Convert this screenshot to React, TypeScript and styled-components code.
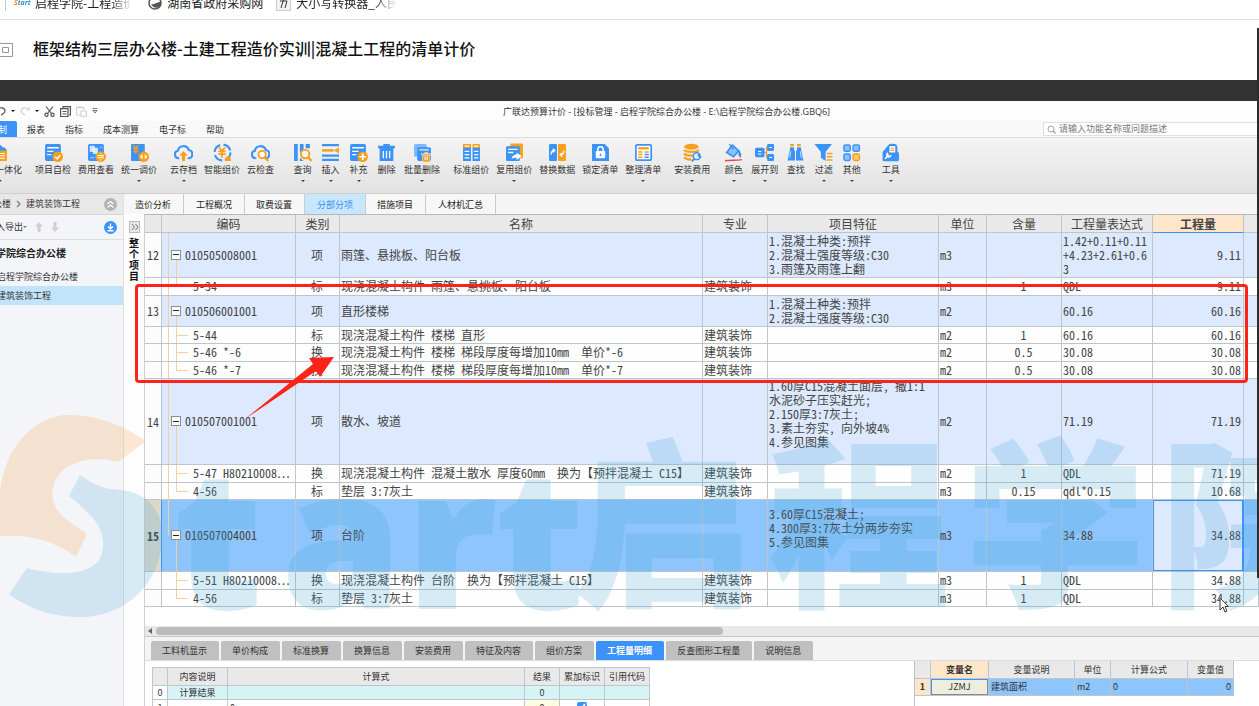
import React from "react";
import styled, { createGlobalStyle, css } from "styled-components";

const BLUE = "#3b92f8";
const ORANGE = "#f9a01b";
const LINE = "#bdc6cc";

const Global = createGlobalStyle`
  *, *::before, *::after { box-sizing: border-box; }
  body {
    margin: 0;
    background: #fff;
    color: #333;
    font-family: "Noto Sans CJK SC", "Open Sans", sans-serif;
  }
  button, input { font: inherit; color: inherit; }
  button { border: 0; padding: 0; background: none; }
`;

const Page = styled.div`
  position: relative;
  height: 100vh;
  display: flex;
  flex-direction: column;
  overflow: hidden;
`;

/* ---------- browser bookmarks and lesson title ---------- */

const BookmarkBar = styled.nav`
  flex: none;
  height: 20px;
  padding: 0 0 8px 5px;
  display: flex;
  align-items: flex-end;
  overflow: hidden;
  border-bottom: 1px solid #e2e2e2;
`;

const Divider = styled.span`
  width: 1px;
  height: 16px;
  margin-right: 8px;
  background: #c8c8c8;
`;

const Bookmark = styled.a<{ $fade?: boolean }>`
  display: flex;
  align-items: center;
  gap: 5px;
  height: 16px;
  margin-right: 13px;
  font-size: 12px;
  line-height: 16px;
  color: #222;
  text-decoration: none;
  white-space: nowrap;
  ${(p) => p.$fade && css`
    -webkit-mask-image: linear-gradient(90deg, #000 80%, transparent 98%);
    mask-image: linear-gradient(90deg, #000 80%, transparent 98%);
  `}
`;

const StartMark = styled.span`
  width: 16px;
  font: italic bold 7px/16px "Open Sans", sans-serif;
  color: #2b8fd0;
  &::first-letter { color: #f08a24; }
`;

const LessonHeader = styled.header`
  flex: none;
  height: 60px;
  padding-bottom: 4px;
  display: flex;
  align-items: center;
  gap: 20px;
  svg { margin-top: 4px; }
`;

const LessonTitle = styled.h1`
  margin: 0;
  font-size: 16px;
  line-height: 24px;
  font-weight: 500;
  color: #111;
`;

const PlayerBand = styled.div`
  flex: none;
  height: 21px;
  background: #333;
`;

/* ---------- application window ---------- */

const AppWindow = styled.main`
  position: relative;
  flex: 1;
  min-height: 0;
  margin-left: -24px;
  display: flex;
  flex-direction: column;
  font-size: 9px;
  line-height: 12px;
  background: #fff;
`;

const TitleRow = styled.div`
  flex: none;
  height: 20px;
  padding: 0 24px 0 20px;
  display: flex;
  align-items: center;
  background: #fdfdfd;
`;

const QuickAccess = styled.div`
  display: flex;
  align-items: center;
  gap: 5px;
`;

const IconButton = styled.button<{ $dim?: boolean }>`
  display: flex;
  color: ${(p) => (p.$dim ? "#d4d4d4" : "#555")};
`;

const WindowTitle = styled.div`
  flex: 1;
  padding-top: 1px;
  text-align: center;
  white-space: nowrap;
  font-family: "Open Sans", "Noto Sans CJK SC", sans-serif;
`;

const MenuRow = styled.nav`
  flex: none;
  height: 17px;
  padding-left: 3px;
  display: flex;
  background: #f9f9f9;
  border-bottom: 1px solid #dcdcdc;
`;

const MenuItem = styled.button<{ $active?: boolean }>`
  padding: 2px 10px 0;
  border-radius: 2px 2px 0 0;
  color: ${(p) => (p.$active ? "#fff" : "#333")};
  background: ${(p) => (p.$active ? BLUE : "none")};
`;

const SearchBox = styled.label`
  width: 216px;
  height: 14px;
  margin: 1px 0 0 auto;
  padding-left: 3px;
  display: flex;
  align-items: center;
  gap: 3px;
  color: #999;
  background: #fff;
  border: 1px solid #e0e0e0;
  border-right: 0;
  input {
    flex: 1;
    min-width: 0;
    height: 12px;
    padding: 0;
    border: 0;
    outline: 0;
    background: none;
  }
  input::placeholder { color: #777; opacity: 1; }
`;

const Ribbon = styled.div`
  flex: none;
  height: 56px;
  padding-top: 5px;
  padding-left: 1px;
  display: flex;
  background: linear-gradient(#f4f4f4, #e2e2e2);
  border-bottom: 1px solid #cfcfcf;
`;

const RibbonGroup = styled.div<{ $wide?: boolean }>`
  display: flex;
  align-items: flex-start;
  gap: 7px;
  margin-right: ${(p) => (p.$wide ? 18 : 13)}px;
`;

const RibbonButton = styled.button`
  min-width: 21px;
  display: flex;
  flex-direction: column;
  align-items: center;
  white-space: nowrap;
  line-height: 12px;
  svg { display: block; }
  span { margin: 2px 0 4px; }
`;

const Caret = styled.i<{ $color?: string }>`
  width: 0;
  height: 0;
  border: 2px solid transparent;
  border-top-color: ${(p) => p.$color || "#444"};
  border-bottom: 0;
`;

const Body = styled.div`
  flex: 1;
  min-height: 0;
  display: flex;
`;

const ProjectPanel = styled.aside`
  flex: none;
  width: 148px;
  background: #f4f5f8;
  border-right: 1px solid #e0e0e0;
`;

const Crumbs = styled.div`
  height: 21px;
  padding: 0 6px 0 17px;
  display: flex;
  align-items: center;
  gap: 5px;
  background: #e8e8e8;
  border-bottom: 1px solid #d6d6d6;
`;

const PanelTools = styled.div`
  height: 25px;
  padding: 0 6px 0 11px;
  display: flex;
  align-items: center;
  border-bottom: 1px solid #dedede;
`;

const Push = styled.span`
  margin-left: auto;
  display: flex;
`;

const Arrows = styled.span`
  display: flex;
  gap: 6px;
  margin-left: 7px;
`;

const TreeRoot = styled.div`
  padding: 5px 0 6px 20px;
  font-size: 10px;
  line-height: 16px;
  font-weight: bold;
  color: #222;
`;

const TreeItem = styled.div<{ $selected?: boolean }>`
  padding: 0 0 0 21px;
  line-height: 19px;
  background: ${(p) => (p.$selected ? "#c3e3fb" : "none")};
`;

const Workspace = styled.div`
  flex: 1;
  min-width: 0;
  display: flex;
  flex-direction: column;
`;

const ViewTabs = styled.div`
  flex: none;
  height: 20px;
  display: flex;
  background: #f5f5f5;
`;

const ViewTab = styled.button<{ $active?: boolean }>`
  padding: 1px 12px 0 11px;
  color: ${(p) => (p.$active ? BLUE : "#222")};
  background: ${(p) => (p.$active ? "#c8e6fd" : "#f7f7f7")};
  border-right: 1px solid #ccc;
  &:nth-child(even) { padding-left: 12px; }
`;

const WorkArea = styled.div`
  flex: 1;
  min-height: 0;
  display: flex;
`;

const Strip = styled.div`
  flex: none;
  width: 21px;
  padding: 7px 0 0 5px;
  border-right: 1px solid #d0d0d0;
  background: #fdfdfd;
`;

const StripToggle = styled.button`
  width: 11px;
  height: 12px;
  display: flex;
  align-items: center;
  justify-content: center;
  color: #777;
  background: #e6e6e6;
  border: 1px solid #bbb;
`;

const StripLabel = styled.div`
  width: 10px;
  margin-top: 4px;
  font-size: 10px;
  line-height: 11px;
  font-weight: bold;
  color: #111;
`;

const Content = styled.div`
  flex: 1;
  min-width: 0;
  display: flex;
  flex-direction: column;
`;

const GridArea = styled.div`
  position: relative;
  flex: none;
  height: 412px;
  border-top: 1px solid #b8b8b8;
`;

const Table = styled.table`
  width: 100%;
  table-layout: fixed;
  border-spacing: 0;
  font: 12px/14px "Noto Sans Mono CJK SC", "Liberation Serif", "Noto Sans CJK SC", monospace;
  color: #444;
`;

const HeadCell = styled.th<{ $active?: boolean }>`
  height: 18px;
  padding: 0;
  font-weight: ${(p) => (p.$active ? "bold" : "normal")};
  white-space: nowrap;
  background: ${(p) => (p.$active ? "#ffe5ca" : "#e9e9e9")};
  border-right: 1px solid ${LINE};
  border-bottom: 1px solid ${(p) => (p.$active ? BLUE : LINE)};
`;

type Tone = "item" | "child" | "selected";
const toneColor: Record<Tone, string> = {
  item: "#dce9fe",
  child: "#fefefe",
  selected: "#8ec5fc",
};

const Row = styled.tr<{ $tone: Tone; $h: number }>`
  height: ${(p) => p.$h}px;
  background: ${(p) => toneColor[p.$tone]};
`;

const Cell = styled.td<{ $align?: string; $focus?: boolean }>`
  padding: 0 2px 1px 1px;
  overflow: hidden;
  white-space: pre;
  text-align: ${(p) => p.$align || "left"};
  border-right: 1px solid ${LINE};
  border-bottom: 1px solid ${LINE};
  ${(p) => p.$focus && css`
    background: #dce9fe;
    box-shadow: inset 0 0 0 1px ${BLUE};
    border-right-color: ${BLUE};
  `}
`;

const NumberCell = styled(Cell)<{ $current?: boolean }>`
  padding: 0;
  text-align: center;
  background: ${(p) => (p.$current ? "#dcd9cb" : "#fcfcfc")};
  font-weight: ${(p) => (p.$current ? "bold" : "normal")};
  border-right-color: ${(p) => (p.$current ? BLUE : LINE)};
`;

const stem = "linear-gradient(#f3cf9f, #f3cf9f)";
const trunkSize = { full: "1px 100%", half: "1px 50%", none: "0 0" };
const branch = { start: ["14px 100%", "1px 50%"], mid: ["14px 0", "1px 100%"], end: ["14px 0", "1px 50%"] };

const CodeCell = styled(Cell)<{
  $trunk: "full" | "half" | "none";
  $branch: "start" | "mid" | "end";
}>`
  padding-left: ${(p) => (p.$branch === "start" ? 9 : 31)}px;
  background-image: ${stem}, ${stem}, ${stem};
  background-repeat: no-repeat;
  background-position: 6px 0, ${(p) => branch[p.$branch][0]}, 14px 50%;
  background-size: ${(p) => trunkSize[p.$trunk]}, ${(p) => branch[p.$branch][1]},
    ${(p) => (p.$branch === "start" ? "0 0" : "12px 1px")};
`;

const CodeLabel = styled.span`
  display: flex;
  align-items: center;
  gap: 4px;
`;

const Collapse = styled.button`
  flex: none;
  width: 10px;
  height: 10px;
  display: flex;
  align-items: center;
  justify-content: center;
  background: #fff;
  border: 1px solid #8a9099;
  &::before {
    content: "";
    width: 6px;
    height: 1px;
    background: #222;
  }
`;

const RedFrame = styled.div`
  position: absolute;
  top: 69px;
  left: -10px;
  right: 11px;
  height: 99px;
  border: 3px solid #fb2416;
  border-radius: 4px;
`;

const RedArrow = styled.svg`
  position: absolute;
  top: 140px;
  left: 98px;
`;

const Pointer = styled.svg`
  position: absolute;
  top: 382px;
  right: 30px;
`;

const Scroll = styled.div`
  flex: none;
  height: 11px;
  padding: 0 0 0 3px;
  display: flex;
  align-items: center;
  gap: 4px;
  background: #e8e8e8;
  border-bottom: 1px solid #c4c8cb;
`;

const ScrollThumb = styled.div`
  width: 51%;
  height: 8px;
  border-radius: 4px;
  background: #bcbcbc;
`;

const DetailTabs = styled.div`
  flex: none;
  height: 24px;
  padding-left: 6px;
  display: flex;
  align-items: flex-end;
  gap: 2px;
  background: #f4f4f5;
  border-bottom: 1px solid #dcdcdc;
`;

const DetailTab = styled.button<{ $active?: boolean }>`
  height: 19px;
  padding: 1px 12px 0 11px;
  white-space: nowrap;
  border-radius: 2px 2px 0 0;
  font-weight: ${(p) => (p.$active ? "bold" : "normal")};
  color: ${(p) => (p.$active ? "#fff" : "#333")};
  background: ${(p) => (p.$active ? BLUE : "#c0c0c0")};
`;

const Detail = styled.div`
  flex: 1;
  min-height: 0;
  display: flex;
  overflow: hidden;
`;

const CalcPane = styled.section`
  flex: 1;
  padding: 6px 7px;
`;

const VarPane = styled.section`
  flex: 0 0 345px;
  border-left: 1px solid #c0c0c0;
`;

const SmallTable = styled.table<{ $w: number }>`
  width: ${(p) => p.$w}px;
  table-layout: fixed;
  border-spacing: 0;
  border-left: 1px solid ${LINE};
  border-top: 1px solid ${LINE};
  white-space: nowrap;
`;

const SmallHead = styled.th<{ $active?: boolean }>`
  height: 18px;
  padding: 0;
  font-weight: ${(p) => (p.$active ? "bold" : "normal")};
  background: ${(p) => (p.$active ? "#ffe5ca" : "#e9e9e9")};
  border-right: 1px solid ${LINE};
  border-bottom: 1px solid ${LINE};
`;

const SmallCell = styled.td<{ $bg?: string; $align?: string; $bold?: boolean; $focus?: boolean }>`
  height: 14px;
  padding: 0 2px;
  text-align: ${(p) => p.$align || "center"};
  background: ${(p) => p.$bg || "#fff"};
  font-weight: ${(p) => (p.$bold ? "bold" : "normal")};
  border-right: 1px solid ${LINE};
  border-bottom: 1px solid ${LINE};
  ${(p) => p.$focus && css`box-shadow: inset 1px 1px 0 ${BLUE}, inset -1px -1px 0 #888;`}
`;

const VarTable = styled(SmallTable)`
  border-left: 0;
  border-top: 0;
  td { height: 17px; }
`;

const Tick = styled.input`
  width: 10px;
  height: 10px;
  margin: 2px 0 0;
  accent-color: ${BLUE};
`;

const Watermark = styled.svg`
  position: absolute;
  top: 300px;
  left: 24px;
  width: calc(100% - 24px);
  height: 230px;
  pointer-events: none;
`;

const PageScrollThumb = styled.div`
  position: absolute;
  top: 28px;
  right: 0;
  width: 2px;
  height: 550px;
  background: #2c2c2c;
`;

/* ---------- ribbon drawings, all on an 18-unit board ---------- */

const doc = <rect x="1" y="1" width="15" height="16" rx="1.5" fill={BLUE} />;
const cloud = (
  <path d="M5 14.5H4.5A3.6 3.6 0 0 1 3.6 7.4 5.4 5.4 0 0 1 14 6.6a4 4 0 0 1 0 7.9H13" fill="none" stroke={BLUE} strokeWidth="2" />
);

const art: Record<string, React.ReactNode> = {
  integrate: (
    <>
      <path d="M3 12a4 4 0 0 1 0-7 5 5 0 0 1 9-1 4 4 0 0 1 4 4v3z" fill={BLUE} />
      <rect x="7" y="7" width="9" height="10" rx="1" fill={ORANGE} />
      <path d="M9 10h5M9 12h5M9 14.500h5" stroke="#fff" />
    </>
  ),
  check: (
    <>
      {doc}
      <path d="M3 4.500h11M3 8h6M3 11h4" stroke="#fff" strokeWidth="1.200" />
      <circle cx="13" cy="13" r="5" fill={ORANGE} />
      <path d="M10.500 13l2 2 3-3.500" fill="none" stroke="#fff" strokeWidth="1.400" />
    </>
  ),
  fee: (
    <>
      {doc}
      <path d="M3 3h4v5H3zM6 5h4v5H6z" fill="#cfe4fd" stroke="#fff" strokeWidth=".6" />
      <path d="M12 4h3M3 14h4" stroke="#9fcbfb" />
      <circle cx="13" cy="13" r="5" fill={ORANGE} />
      <path d="M10 12h6M16 14h-6M13 9.500v1M13 15.500v1" stroke="#fff" strokeWidth="1.100" />
    </>
  ),
  adjust: (
    <>
      <rect x="1" y="1" width="13" height="16" rx="1" fill={BLUE} />
      <path d="M3 2l2.500 3L8 2M3 5.500h5M3 8h5M5.500 5v5" fill="none" stroke={ORANGE} strokeWidth="1.400" />
      <circle cx="13" cy="13" r="5" fill={ORANGE} />
      <path d="M12 10.500v5L9.500 13zM14 10.500v5l2.500-2.500z" fill="#fff" />
    </>
  ),
  upload: (
    <>
      {cloud}
      <path d="M9 7.500l4 4.500h-2.500v5h-3v-5H5z" fill={ORANGE} />
    </>
  ),
  smart: (
    <>
      <circle cx="9" cy="9" r="7.500" fill="none" stroke={BLUE} strokeWidth="2" strokeDasharray="9 3" />
      <path d="M5.500 4l3 3.500 3-3.500M5 8h7M5 10.500h7M8.500 7.500V14" fill="none" stroke={ORANGE} strokeWidth="1.600" />
      <path d="M11 17v-2l3-3 3 3v2z" fill={ORANGE} />
    </>
  ),
  cloudCheck: (
    <>
      {cloud}
      <circle cx="10.500" cy="11" r="3.500" fill="#fff" stroke={ORANGE} strokeWidth="1.700" />
      <path d="M13 13.500l3.500 3.500" stroke={ORANGE} strokeWidth="2" />
    </>
  ),
  query: (
    <>
      <path d="M1 1h3.500v16H1zM6.500 1H10v5l-3.500 3zM12 1h4v4h-4zM6.500 14L10 17H6.500z" fill={BLUE} />
      <circle cx="11.500" cy="10.500" r="4" fill="#f4f4f4" stroke={ORANGE} strokeWidth="1.800" />
      <path d="M14.500 13.500l3 3.500" stroke={ORANGE} strokeWidth="2.200" />
    </>
  ),
  insert: (
    <>
      <path d="M1 2h16M1 12h16M1 16h16" stroke={BLUE} strokeWidth="2.200" />
      <path d="M1 7h11" stroke={ORANGE} strokeWidth="2.400" />
      <path d="M17 4v6l-5-3z" fill={ORANGE} />
    </>
  ),
  supply: (
    <>
      {doc}
      <path d="M3 4.500h11M3 8h6M3 11h4" stroke="#fff" strokeWidth="1.200" />
      <circle cx="13" cy="13" r="5" fill={ORANGE} />
      <path d="M10 13h6M13 10v6" stroke="#fff" strokeWidth="1.500" />
    </>
  ),
  remove: (
    <>
      <path d="M1 2.500h16V5H1zM6 1h6v2H6zM2.500 5h13v12h-13z" fill={BLUE} />
      <path d="M6 7.500v7M9 7.500v7M12 7.500v7" stroke="#fff" strokeWidth="1.200" />
    </>
  ),
  batch: (
    <>
      <rect x="1" y="1" width="12" height="12" rx="1.500" fill="#7db8fa" />
      <rect x="4" y="4" width="13" height="13" rx="1.500" fill={BLUE} />
      <path d="M6 6.500h9" stroke="#fff" />
      <path d="M8 10h9v1.500H8zM9 12h7v6H9zM11 9h3v1h-3z" fill={ORANGE} stroke="#fff" strokeWidth=".4" />
      <path d="M11.500 13v3M13.500 13v3" stroke="#fff" />
    </>
  ),
  standard: (
    <>
      <path d="M1 1h7.500v4H1zM1 4h7.500v13H1zM10 4h7v13h-7z" fill={BLUE} />
      <path d="M1 1h7.500v3.500H1zM10 1h7v3.500h-7z" fill={ORANGE} />
      <path d="M2.500 3h4.500M2.500 8h4.500M2.500 11h4.500M2.500 14h4.500M11.500 3h4M11.500 8h4M11.500 11h4M11.500 14h4" stroke="#fff" strokeWidth="1.200" />
    </>
  ),
  reuse: (
    <>
      <rect x="5" y="0.500" width="12" height="14" rx="1" fill={ORANGE} />
      <rect x="1" y="3" width="13" height="14" rx="1" fill={BLUE} />
      <path d="M3 6h9M3 9h5" stroke="#fff" strokeWidth="1.200" />
      <path d="M6 15c1-3 3-4 5-4V9l5 3.500-5 3.500v-2c-2 0-3 0-5 1z" fill="#fff" />
    </>
  ),
  replace: (
    <>
      <rect x="1" y="1" width="7.500" height="16" rx="1" fill={BLUE} />
      <rect x="9.500" y="1" width="7.500" height="16" rx="1" fill={ORANGE} />
      <path d="M3 11c0-3 1-4 3-4M4.500 5.500L6.500 7l-2 2M15 7c0 3-1 4-3 4M13.500 9.500l-2 1.500 2 2" fill="none" stroke="#fff" strokeWidth="1.200" />
    </>
  ),
  lock: (
    <>
      <path d="M1 1h12l4 4v12H1z" fill={BLUE} />
      <rect x="4.500" y="7.500" width="9" height="7" rx="1" fill="#fff" />
      <path d="M6.500 8V6a2.500 2.500 0 0 1 5 0v2" fill="none" stroke="#fff" strokeWidth="1.500" />
      <path d="M9 10v2.500" stroke={BLUE} strokeWidth="1.400" />
    </>
  ),
  arrange: (
    <>
      <rect x="1.800" y="1.800" width="14.500" height="14.500" rx="1" fill="#fff" stroke={BLUE} strokeWidth="1.600" />
      <path d="M4 5h10" stroke={ORANGE} strokeWidth="2.200" />
      <path d="M4 8.500h4M4 11h4M4 13.500h4M10 8.500h4" stroke={ORANGE} strokeWidth="1.400" />
      <path d="M10 11h4M10 13.500h4" stroke={BLUE} strokeWidth="1.400" />
    </>
  ),
  install: (
    <>
      <ellipse cx="8" cy="3.500" rx="7" ry="2.700" fill={ORANGE} />
      <path d="M1 6.500c2 2.500 12 2.500 14 0M1 10c2 2.500 9 2.500 12 1M1 13.500c2 2 5 2.300 7 2" fill="none" stroke={ORANGE} strokeWidth="2.200" />
      <circle cx="13" cy="12.500" r="3.200" fill="#f4f4f4" stroke={BLUE} strokeWidth="1.500" />
      <path d="M11 14.500L8.500 17.500M14 11l3 3" stroke={BLUE} strokeWidth="1.800" />
    </>
  ),
  color: (
    <>
      <path d="M8 2l6 5.500-5 5.500-6.500-4z" fill="#8bc2fb" stroke={BLUE} strokeWidth="1.600" />
      <path d="M5 1l4 5M14.500 8c1.500 2 1.500 3 1 5-1.500-1-1.500-3-1-5z" stroke={BLUE} fill={BLUE} strokeWidth="1.200" />
      <path d="M1 16.800c5-1 10 0 16-1" fill="none" stroke="#e8474c" strokeWidth="1.300" />
    </>
  ),
  expand: (
    <>
      <path d="M8 9h3M11 9V4h1M11 9v5h1" fill="none" stroke={ORANGE} strokeWidth="1.200" />
      <rect x="0" y="4.500" width="9" height="9" rx="1.500" fill={BLUE} />
      <rect x="11.500" y="1" width="6.500" height="6.500" rx="1" fill={BLUE} />
      <rect x="11.500" y="10.500" width="6.500" height="6.500" rx="1" fill={BLUE} />
      <path d="M3 8h3M3 10.500h3M13.500 4.300h2.500M13.500 13.800h2.500" stroke="#fff" />
    </>
  ),
  find: (
    <>
      <path d="M4 4h3.500v2l1 2v8.500H1.500L3.500 7zM10.500 4H14l.5 3 2 9.500H9.500V8l1-2z" fill={BLUE} />
      <path d="M4 1h3.500v2H4zM10.500 1H14v2h-3.500z" fill={ORANGE} />
      <path d="M4.500 8l-1 6M13.500 8l1 6" stroke="#bfdcfd" />
    </>
  ),
  filter: (
    <>
      <path d="M0.500 1h16.500L11 8.500v8.500l-4.500-3V8.500z" fill={BLUE} />
      <path d="M12 10h5.500M12 13h5.500M12 16h5.500" stroke={ORANGE} strokeWidth="1.400" />
    </>
  ),
  other: (
    <>
      {[[1.8, 1.8], [10.5, 1.8], [1.8, 10.5]].map(([x, y]) => (
        <rect key={`${x}-${y}`} x={x} y={y} width="6" height="6" rx="1.500" fill="#8bc2fb" stroke={BLUE} strokeWidth="1.400" />
      ))}
      <rect x="10.500" y="10.500" width="6" height="6" rx="1.500" fill="#ffc870" stroke={ORANGE} strokeWidth="1.400" />
    </>
  ),
  tools: (
    <>
      <path d="M1.500 16V8.500L7 2q1-1.300 3-1.300h2q3.500 0 3.500 3.500V8l1.500 1.500V16q0 1.300-1.500 1.300H3Q1.500 17.300 1.500 16z" fill={BLUE} />
      <path d="M8 3h5.500v6H8z" fill="#fff" />
      <path d="M9 5h3.500M9 7h3.500" stroke={ORANGE} />
      <path d="M4 15l3.500-4M6.500 9.500a2 2 0 1 0 3 2" fill="none" stroke="#fff" strokeWidth="1.500" />
    </>
  ),
};

const RibbonIcon = ({ name }: { name: string }) => (
  <svg width="19" height="19" viewBox="0 0 18 18" aria-hidden="true">{art[name]}</svg>
);

type Tool = [icon: string, label: string, menu?: boolean];
const ribbon: { wide?: boolean; tools: Tool[] }[] = [
  { tools: [["integrate", "量价一体化", true]] },
  { tools: [["check", "项目自检"], ["fee", "费用查看"], ["adjust", "统一调价", true]] },
  { wide: true, tools: [["upload", "云存档", true], ["smart", "智能组价"], ["cloudCheck", "云检查"]] },
  { tools: [["query", "查询", true], ["insert", "插入", true], ["supply", "补充", true], ["remove", "删除"], ["batch", "批量删除", true]] },
  { tools: [["standard", "标准组价"], ["reuse", "复用组价", true], ["replace", "替换数据"], ["lock", "锁定清单"], ["arrange", "整理清单", true]] },
  { tools: [["install", "安装费用", true]] },
  { wide: true, tools: [["color", "颜色", true], ["expand", "展开到", true], ["find", "查找"], ["filter", "过滤", true], ["other", "其他", true]] },
  { tools: [["tools", "工具", true]] },
];

/* ---------- bill of quantities ---------- */

interface Entry {
  h: number;
  no?: string;
  code: string;
  kind: string;
  name: string;
  trade?: string;
  feature?: string;
  unit: string;
  ratio?: string;
  expr: string;
  qty: string;
  tone: Tone;
  trunk: "full" | "half" | "none";
  branch: "start" | "mid" | "end";
}

const entries: Entry[] = [
  { h: 45, no: "12", code: "010505008001", kind: "项", name: "雨篷、悬挑板、阳台板", feature: "1.混凝土种类:预拌\n2.混凝土强度等级:C30\n3.雨篷及雨篷上翻", unit: "m3", expr: "1.42+0.11+0.11\n+4.23+2.61+0.6\n3", qty: "9.11", tone: "item", trunk: "full", branch: "start" },
  { h: 18, code: "5-34", kind: "标", name: "现浇混凝土构件 雨篷、悬挑板、阳台板", trade: "建筑装饰", unit: "m3", ratio: "1", expr: "QDL", qty: "9.11", tone: "child", trunk: "full", branch: "end" },
  { h: 31, no: "13", code: "010506001001", kind: "项", name: "直形楼梯", feature: "1.混凝土种类:预拌\n2.混凝土强度等级:C30", unit: "m2", expr: "60.16", qty: "60.16", tone: "item", trunk: "full", branch: "start" },
  { h: 17, code: "5-44", kind: "标", name: "现浇混凝土构件 楼梯 直形", trade: "建筑装饰", unit: "m2", ratio: "1", expr: "60.16", qty: "60.16", tone: "child", trunk: "full", branch: "mid" },
  { h: 18, code: "5-46 *-6", kind: "换", name: "现浇混凝土构件 楼梯 梯段厚度每增加10mm  单价*-6", trade: "建筑装饰", unit: "m2", ratio: "0.5", expr: "30.08", qty: "30.08", tone: "child", trunk: "full", branch: "mid" },
  { h: 17, code: "5-46 *-7", kind: "换", name: "现浇混凝土构件 楼梯 梯段厚度每增加10mm  单价*-7", trade: "建筑装饰", unit: "m2", ratio: "0.5", expr: "30.08", qty: "30.08", tone: "child", trunk: "full", branch: "end" },
  { h: 86, no: "14", code: "010507001001", kind: "项", name: "散水、坡道", feature: "1.60厚C15混凝土面层, 撒1:1\n水泥砂子压实赶光;\n2.150厚3:7灰土;\n3.素土夯实, 向外坡4%\n4.参见图集\n ", unit: "m2", expr: "71.19", qty: "71.19", tone: "item", trunk: "full", branch: "start" },
  { h: 18, code: "5-47 H80210008⋯", kind: "换", name: "现浇混凝土构件 混凝土散水 厚度60mm  换为【预拌混凝土 C15】", trade: "建筑装饰", unit: "m2", ratio: "1", expr: "QDL", qty: "71.19", tone: "child", trunk: "full", branch: "mid" },
  { h: 17, code: "4-56", kind: "标", name: "垫层 3:7灰土", trade: "建筑装饰", unit: "m3", ratio: "0.15", expr: "qdl*0.15", qty: "10.68", tone: "child", trunk: "full", branch: "end" },
  { h: 72, no: "15", code: "010507004001", kind: "项", name: "台阶", feature: "3.60厚C15混凝土;\n4.300厚3:7灰土分两步夯实\n5.参见图集\n ", unit: "m3", expr: "34.88", qty: "34.88", tone: "selected", trunk: "half", branch: "start" },
  { h: 18, code: "5-51 H80210008⋯", kind: "换", name: "现浇混凝土构件 台阶  换为【预拌混凝土 C15】", trade: "建筑装饰", unit: "m3", ratio: "1", expr: "QDL", qty: "34.88", tone: "child", trunk: "none", branch: "mid" },
  { h: 17, code: "4-56", kind: "标", name: "垫层 3:7灰土", trade: "建筑装饰", unit: "m3", ratio: "1", expr: "QDL", qty: "34.88", tone: "child", trunk: "none", branch: "end" },
];

const columns: [label: string, width?: number][] = [
  ["", 17], ["编码", 134], ["类别", 44], ["名称"], ["专业", 65], ["项目特征", 171],
  ["单位", 48], ["含量", 75], ["工程量表达式", 91], ["工程量", 91], ["", 15],
];

const QuantityTable = () => (
  <Table>
    <colgroup>
      {columns.map(([, w], i) => <col key={i} width={w} />)}
    </colgroup>
    <thead>
      <tr>
        {columns.map(([label], i) => (
          <HeadCell key={i} $active={label === "工程量"}>{label}</HeadCell>
        ))}
      </tr>
    </thead>
    <tbody>
      {entries.map((e, i) => {
        const current = e.tone === "selected";
        return (
          <Row key={i} $tone={e.tone} $h={e.h}>
            <NumberCell $current={current}>{e.no}</NumberCell>
            <CodeCell $trunk={e.trunk} $branch={e.branch}>
              <CodeLabel>
                {e.branch === "start" && <Collapse aria-label="折叠" />}
                {e.code}
              </CodeLabel>
            </CodeCell>
            <Cell $align="center">{e.kind}</Cell>
            <Cell>{e.name}</Cell>
            <Cell>{e.trade}</Cell>
            <Cell>{e.feature}</Cell>
            <Cell>{e.unit}</Cell>
            <Cell $align="center">{e.ratio}</Cell>
            <Cell>{e.expr}</Cell>
            <Cell $align="right" $focus={current}>{e.qty}</Cell>
            <Cell />
          </Row>
        );
      })}
    </tbody>
  </Table>
);

const CalcTable = () => (
  <SmallTable $w={498}>
    <colgroup>
      {[15, 60, 297, 35, 45, 45].map((w, i) => <col key={i} width={w} />)}
    </colgroup>
    <thead>
      <tr>
        {["", "内容说明", "计算式", "结果", "累加标识", "引用代码"].map((t, i) => <SmallHead key={i}>{t}</SmallHead>)}
      </tr>
    </thead>
    <tbody>
      <tr>
        <SmallCell>0</SmallCell>
        <SmallCell $bg="#d6f4f6">计算结果</SmallCell>
        <SmallCell $bg="#d6f4f6" />
        <SmallCell $bg="#d6f4f6">0</SmallCell>
        <SmallCell $bg="#d6f4f6" />
        <SmallCell $bg="#d6f4f6" />
      </tr>
      <tr>
        <SmallCell>1</SmallCell>
        <SmallCell />
        <SmallCell $align="left">0</SmallCell>
        <SmallCell $bg="#fdfbe0">0</SmallCell>
        <SmallCell><Tick type="checkbox" defaultChecked aria-label="累加标识" /></SmallCell>
        <SmallCell />
      </tr>
    </tbody>
  </SmallTable>
);

const VariableTable = () => (
  <VarTable $w={319}>
    <colgroup>
      {[16, 58, 86, 36, 77, 46].map((w, i) => <col key={i} width={w} />)}
    </colgroup>
    <thead>
      <tr>
        {["", "变量名", "变量说明", "单位", "计算公式", "变量值"].map((t, i) => (
          <SmallHead key={i} $active={t === "变量名"}>{t}</SmallHead>
        ))}
      </tr>
    </thead>
    <tbody>
      <tr>
        <SmallCell $bg="#ffe5ca" $bold>1</SmallCell>
        <SmallCell $bg="#eeeede" $focus>JZMJ</SmallCell>
        <SmallCell $bg="#8ec5fc" $align="left">建筑面积</SmallCell>
        <SmallCell $bg="#8ec5fc" $align="left">m2</SmallCell>
        <SmallCell $bg="#8ec5fc" $align="left">0</SmallCell>
        <SmallCell $bg="#8ec5fc" $align="right">0</SmallCell>
      </tr>
    </tbody>
  </VarTable>
);

const line = { fill: "none", stroke: "currentColor", strokeWidth: 1.2 };

export default function App() {
  return (
    <Page>
      <Global />
      <BookmarkBar>
        <Divider />
        <Bookmark href="#" $fade><StartMark>Start</StartMark>启程学院-工程造价</Bookmark>
        <Bookmark href="#">
          <svg width="14" height="14" viewBox="0 0 14 14">
            <circle cx="7" cy="7" r="6" fill="#fff" stroke="#555" strokeWidth="1.500" />
            <path d="M3 8c4 1 5-2 10-2 1 5-6 9-10 2z" fill="#555" />
          </svg>
          湖南省政府采购网
        </Bookmark>
        <Bookmark href="#" $fade>
          <svg width="15" height="15" viewBox="0 0 15 15">
            <rect x=".5" y=".5" width="14" height="14" fill="#f2f2f2" stroke="#ccc" />
            <path d="M4 5h7M8 2L5 12M11 5l-2 7" stroke="#333" fill="none" />
          </svg>
          大小写转换器_人民
        </Bookmark>
      </BookmarkBar>
      <LessonHeader>
        <svg width="13" height="14" viewBox="0 0 13 14" aria-hidden="true">
          <path d="M0 .5h12.500v13H0M2.500 4.500h6v5h-6z" fill="none" stroke="#999" />
        </svg>
        <LessonTitle>框架结构三层办公楼-土建工程造价实训|混凝土工程的清单计价</LessonTitle>
      </LessonHeader>
      <PlayerBand />

      <AppWindow>
        <TitleRow>
          <QuickAccess>
            <IconButton aria-label="撤销">
              <svg width="10" height="10" viewBox="0 0 10 10"><path d="M1 1v3h3M1 4c3-4 8-2 8 1 0 2-2 3-4 4" {...line} /></svg>
            </IconButton>
            <Caret $color="#111" />
            <IconButton aria-label="恢复" $dim>
              <svg width="10" height="10" viewBox="0 0 10 10"><path d="M9 1v3H6M9 4C6 0 1 2 1 5c0 2 2 3 4 4" {...line} /></svg>
            </IconButton>
            <Caret $color="#111" />
            <IconButton aria-label="剪切">
              <svg width="11" height="11" viewBox="0 0 11 11">
                <path d="M2 .5l5.500 7M9 .5l-5.500 7" {...line} />
                <circle cx="2.500" cy="8.700" r="1.600" {...line} /><circle cx="8.500" cy="8.700" r="1.600" {...line} />
              </svg>
            </IconButton>
            <IconButton aria-label="复制">
              <svg width="11" height="11" viewBox="0 0 11 11">
                <path d="M3 2V.6h7.400V9H9M.6 2.600H8v8H.6zM2.500 5.500h4M2.500 8h4" {...line} />
              </svg>
            </IconButton>
            <IconButton aria-label="粘贴" $dim>
              <svg width="11" height="11" viewBox="0 0 11 11">
                <path d="M5 9H.6V1.600H8V4M2.500 .6h3M5 5h5.400v5.400H5z" {...line} />
              </svg>
            </IconButton>
            <IconButton aria-label="更多">
              <svg width="6" height="6" viewBox="0 0 6 6"><path d="M.5 .5h5M1 2.500h4L3 5z" fill="none" stroke="currentColor" strokeWidth=".8" /></svg>
            </IconButton>
          </QuickAccess>
          <WindowTitle>广联达预算计价 - [投标管理 - 启程学院综合办公楼 - E:\启程学院综合办公楼.GBQ6]</WindowTitle>
        </TitleRow>

        <MenuRow>
          {["编制", "报表", "指标", "成本测算", "电子标", "帮助"].map((m, i) => (
            <MenuItem key={m} $active={i === 0}>{m}</MenuItem>
          ))}
          <SearchBox>
            <svg width="9" height="9" viewBox="0 0 9 9"><circle cx="4" cy="4" r="3" {...line} strokeWidth={0.9} /><path d="M6 6l2.500 2.500" {...line} /></svg>
            <input type="search" aria-label="搜索功能" placeholder="请输入功能名称或问题描述" />
          </SearchBox>
        </MenuRow>

        <Ribbon>
          {ribbon.map((g, i) => (
            <RibbonGroup key={i} $wide={g.wide}>
              {g.tools.map(([icon, label, menu]) => (
                <RibbonButton key={label}>
                  <RibbonIcon name={icon} />
                  <span>{label}</span>
                  {menu && <Caret />}
                </RibbonButton>
              ))}
            </RibbonGroup>
          ))}
        </Ribbon>

        <Body>
          <ProjectPanel>
            <Crumbs>
              <span>公楼</span>
              <svg width="5" height="8" viewBox="0 0 5 8" color="#777"><path d="M1 1l3 3-3 3" {...line} /></svg>
              <span>建筑装饰工程</span>
              <Push>
                <svg width="13" height="13" viewBox="0 0 13 13">
                  <circle cx="6.500" cy="6.500" r="6.500" fill="#b3b3b3" />
                  <path d="M3.500 6l3-2.500 3 2.500M3.500 9.500l3-2.500 3 2.500" fill="none" stroke="#fff" strokeWidth="1.200" />
                </svg>
              </Push>
            </Crumbs>
            <PanelTools>
              <span>导入导出</span>
              <Caret $color="#777" />
              <Arrows>
                <svg width="10" height="12" viewBox="0 0 10 12"><path d="M5 1l4 4.500H6.500V11h-3V5.500H1z" fill="#cfcfcf" /></svg>
                <svg width="10" height="12" viewBox="0 0 10 12"><path d="M5 11L1 6.500h2.500V1h3v5.500H9z" fill="#cfcfcf" /></svg>
              </Arrows>
              <Push>
                <svg width="13" height="13" viewBox="0 0 13 13">
                  <circle cx="6.500" cy="6.500" r="6.500" fill={BLUE} />
                  <path d="M6.500 2.500v5M4 5.500L6.500 8 9 5.500M3.500 9.700h6" fill="none" stroke="#fff" strokeWidth="1.400" />
                </svg>
              </Push>
            </PanelTools>
            <TreeRoot>学院综合办公楼</TreeRoot>
            <TreeItem>启程学院综合办公楼</TreeItem>
            <TreeItem $selected>建筑装饰工程</TreeItem>
          </ProjectPanel>

          <Workspace>
            <ViewTabs>
              {["造价分析", "工程概况", "取费设置", "分部分项", "措施项目", "人材机汇总"].map((t) => (
                <ViewTab key={t} $active={t === "分部分项"}>{t}</ViewTab>
              ))}
            </ViewTabs>
            <WorkArea>
              <Strip>
                <StripToggle aria-label="展开">
                  <svg width="8" height="8" viewBox="0 0 8 8"><path d="M1 1l2.500 3L1 7M4.500 1L7 4 4.500 7" {...line} strokeWidth={1} /></svg>
                </StripToggle>
                <StripLabel>整个项目</StripLabel>
              </Strip>
              <Content>
                <GridArea>
                  <QuantityTable />
                  <RedFrame />
                  <RedArrow width="94" height="66" viewBox="0 0 94 66">
                    <path d="M2 64L70 9l-4-6 25-1-14 20-4-6z" fill="#fb2416" />
                  </RedArrow>
                  <Pointer width="10" height="16" viewBox="0 0 10 16">
                    <path d="M1 1v12l3-3 2 5 2-1-2-4.500h3.500z" fill="#fff" stroke="#333" />
                  </Pointer>
                </GridArea>
                <Scroll>
                  <svg width="4" height="6" viewBox="0 0 4 6"><path d="M4 0v6L0 3z" fill="#666" /></svg>
                  <ScrollThumb />
                </Scroll>
                <DetailTabs>
                  {["工料机显示", "单价构成", "标准换算", "换算信息", "安装费用", "特征及内容", "组价方案", "工程量明细", "反查图形工程量", "说明信息"].map((t) => (
                    <DetailTab key={t} $active={t === "工程量明细"}>{t}</DetailTab>
                  ))}
                </DetailTabs>
                <Detail>
                  <CalcPane><CalcTable /></CalcPane>
                  <VarPane><VariableTable /></VarPane>
                </Detail>
              </Content>
            </WorkArea>
          </Workspace>
        </Body>

        <Watermark aria-hidden="true">
          <path
            d="M0 135V90C6 40 40 14 68 14c30 0 55 10 78 26l-28 21c-10-3-22-4-30-2-28 4-38 22-35 40 3 16 18 22 34 34l-11 23C50 138 30 134 0 135z"
            fill="#fba550" opacity=".24"
          />
          <path
            d="M80 74c14 10 24 14 40 15 25 2 42 18 42 45 0 50-38 82-82 82-30 0-54-10-71-23l18-26c30 8 60 8 72-8 8-14 4-32-8-44-8-8-14-14-22-20z"
            fill="#3fa4d6" opacity=".2"
          />
          <g fill="#3fa4d6" opacity=".2">
            <text x="173 281 406 495" y="208" fontFamily="Open Sans" fontWeight="800" fontSize="195">tart</text>
            <text x="572 768 964 1160" y="192" fontFamily="Noto Sans CJK SC" fontWeight="900" fontSize="182">启程学院</text>
          </g>
        </Watermark>
      </AppWindow>
      <PageScrollThumb />
    </Page>
  );
}
